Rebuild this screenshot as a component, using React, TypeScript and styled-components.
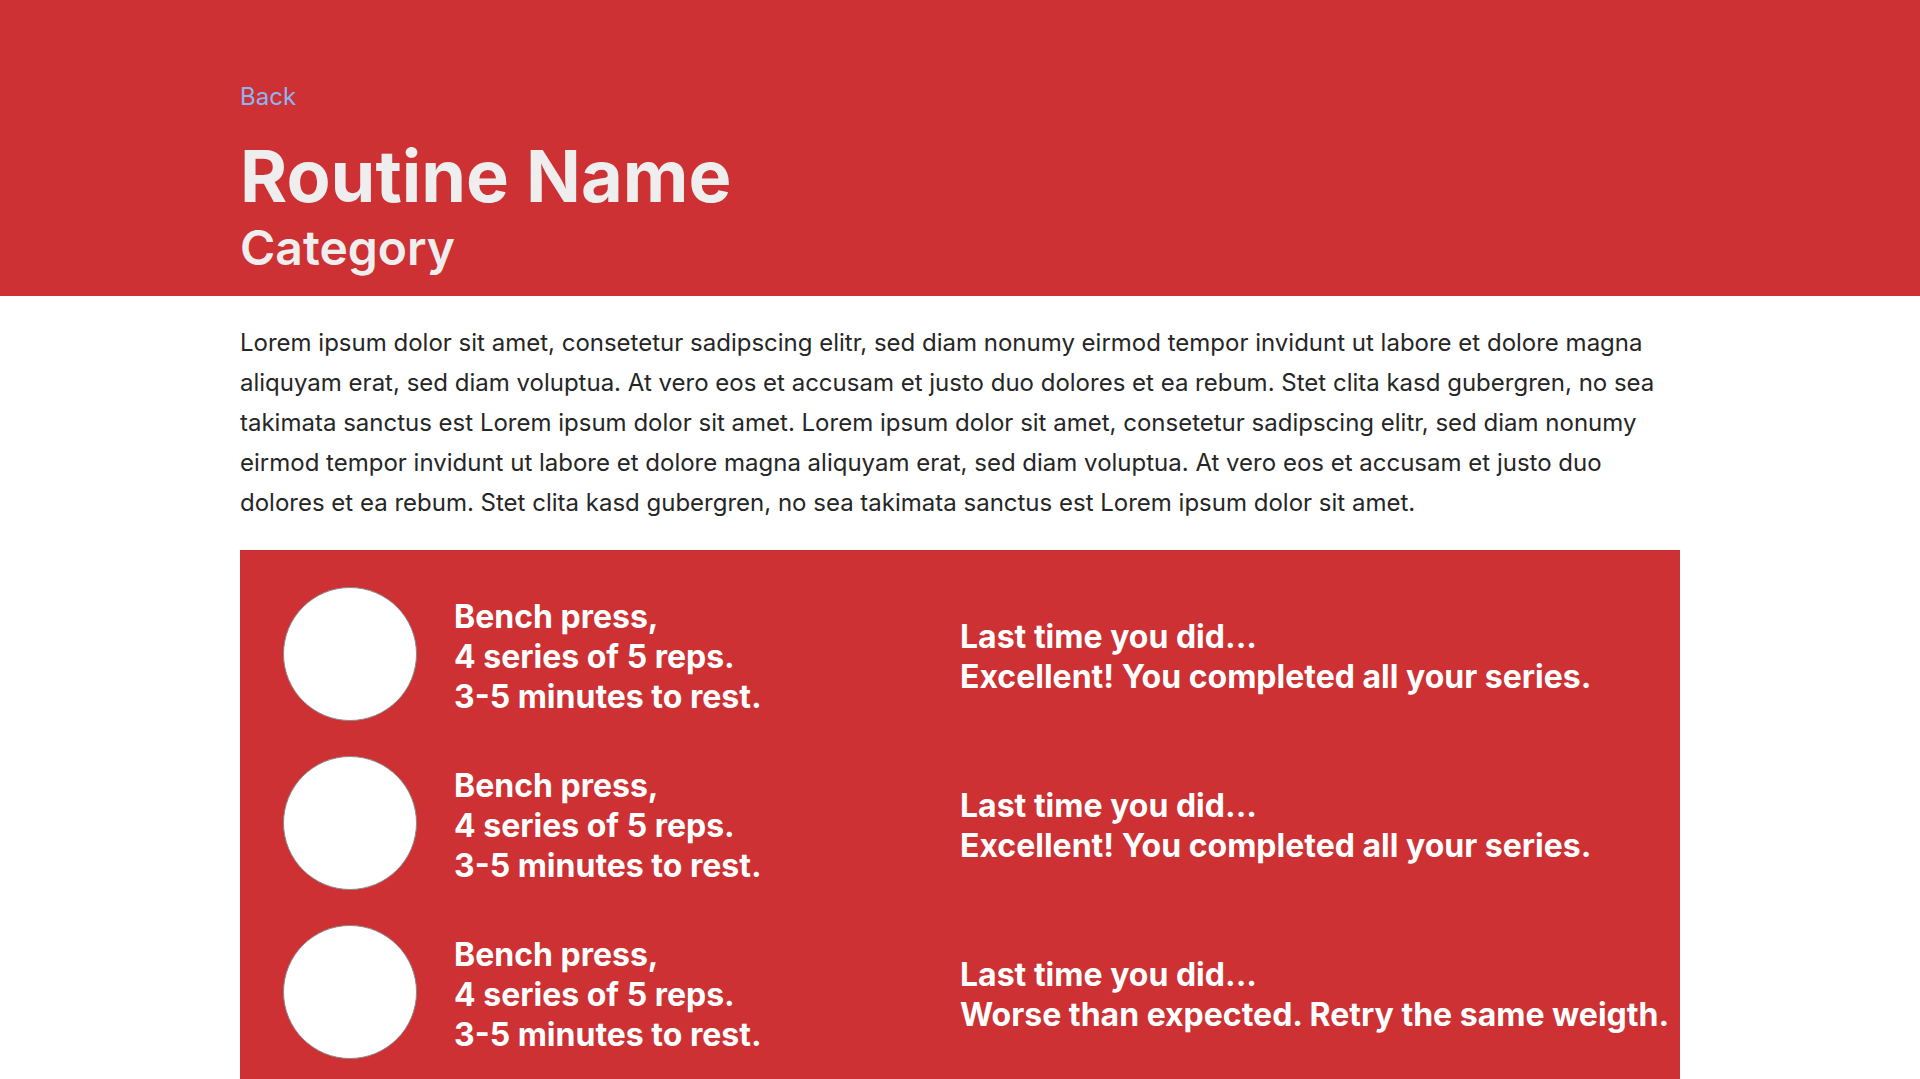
import styled, { createGlobalStyle } from "styled-components";

const GlobalStyle = createGlobalStyle`
  * {
    box-sizing: border-box;
  }
  body {
    margin: 0;
    background: #ffffff;
    font-family: Inter, "Noto Sans", "Liberation Sans", sans-serif;
  }
`;

const exercises = [
  {
    id: 1,
    name: "Bench press,",
    series: "4 series of 5 reps.",
    rest: "3-5 minutes to rest.",
    feedback: "Excellent! You completed all your series.",
  },
  {
    id: 2,
    name: "Bench press,",
    series: "4 series of 5 reps.",
    rest: "3-5 minutes to rest.",
    feedback: "Excellent! You completed all your series.",
  },
  {
    id: 3,
    name: "Bench press,",
    series: "4 series of 5 reps.",
    rest: "3-5 minutes to rest.",
    feedback: "Worse than expected. Retry the same weigth.",
  },
];

const LOREM =
  "Lorem ipsum dolor sit amet, consetetur sadipscing elitr, sed diam nonumy eirmod tempor invidunt ut labore et dolore magna aliquyam erat, sed diam voluptua. At vero eos et accusam et justo duo dolores et ea rebum. Stet clita kasd gubergren, no sea takimata sanctus est Lorem ipsum dolor sit amet. Lorem ipsum dolor sit amet, consetetur sadipscing elitr, sed diam nonumy eirmod tempor invidunt ut labore et dolore magna aliquyam erat, sed diam voluptua. At vero eos et accusam et justo duo dolores et ea rebum. Stet clita kasd gubergren, no sea takimata sanctus est Lorem ipsum dolor sit amet.";

function App() {
  return (
    <>
      <GlobalStyle />
      <Header>
        <BackLink href="#">Back</BackLink>
        <Title>Routine Name</Title>
        <Category>Category</Category>
      </Header>
      <Main>
        <Description>{LOREM}</Description>
        <ExerciseList>
          {exercises.map((ex) => (
            <ExerciseRow key={ex.id}>
              <ExerciseInfo>
                <Thumb />
                <InfoText>
                  {ex.name}
                  <br />
                  {ex.series}
                  <br />
                  {ex.rest}
                </InfoText>
              </ExerciseInfo>
              <LastTime>
                Last time you did...
                <br />
                {ex.feedback}
              </LastTime>
            </ExerciseRow>
          ))}
        </ExerciseList>
      </Main>
    </>
  );
}

export default App;

const Header = styled.header`
  background: #cd3133;
  padding: 82px 240px 19px;
  display: flex;
  flex-direction: column;
  align-items: flex-start;
`;

const BackLink = styled.a`
  font-size: 24px;
  line-height: 29px;
  color: #8fb4f2;
  text-decoration: none;
  margin-bottom: 22px;
`;

const Title = styled.h1`
  margin: 0;
  font-size: 72px;
  line-height: 86px;
  font-weight: 700;
  color: #eeeeee;
`;

const Category = styled.h2`
  margin: 0;
  font-size: 48px;
  line-height: 58px;
  font-weight: 600;
  color: #eeeeee;
`;

const Main = styled.main`
  padding: 0 240px;
`;

const Description = styled.p`
  margin: 0;
  padding: 27px 0;
  font-size: 24px;
  line-height: 40px;
  color: #262626;
`;

const ExerciseList = styled.section`
  background: #cd3133;
  padding: 37px 0;
  display: flex;
  flex-direction: column;
  gap: 35px;
`;

const ExerciseRow = styled.div`
  display: grid;
  grid-template-columns: 1fr 1fr;
  align-items: center;
`;

const ExerciseInfo = styled.div`
  display: flex;
  align-items: center;
  gap: 37px;
  padding-left: 43px;
`;

const Thumb = styled.div`
  width: 134px;
  height: 134px;
  flex-shrink: 0;
  border-radius: 50%;
  background: #ffffff;
  border: 1px solid #8a8a8a;
`;

const InfoText = styled.p`
  margin: 0;
  padding-top: 5px;
  font-size: 32px;
  line-height: 40px;
  font-weight: 700;
  color: #ffffff;
`;

const LastTime = styled.p`
  margin: 0;
  padding-top: 5px;
  font-size: 32px;
  line-height: 40px;
  font-weight: 700;
  color: #ffffff;
  white-space: nowrap;
`;
